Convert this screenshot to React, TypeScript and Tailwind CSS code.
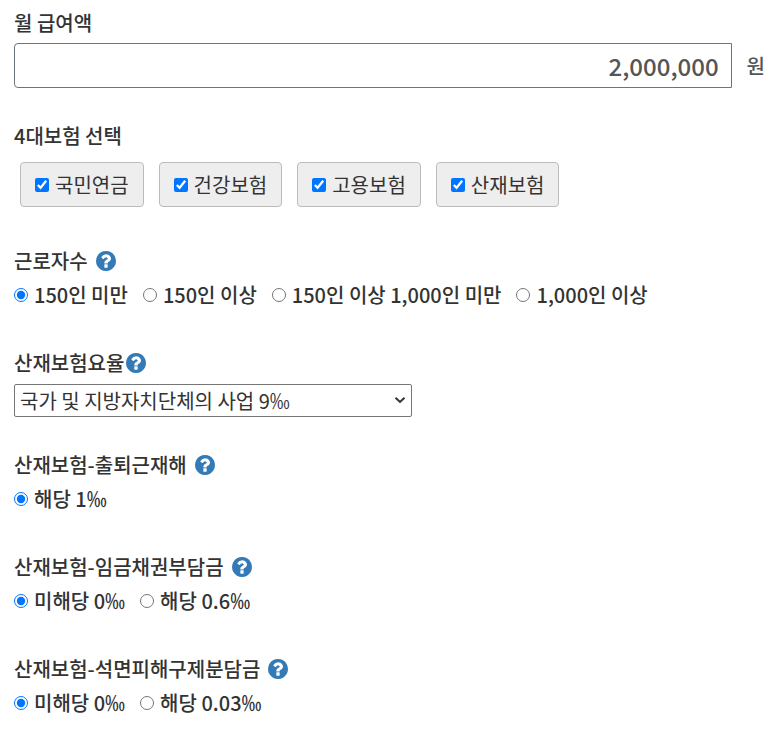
import { useState } from 'react';
import type { ReactNode } from 'react';

const INSURANCES = ['국민연금', '건강보험', '고용보험', '산재보험'];

const WORKER_COUNTS = ['150인 미만', '150인 이상', '150인 이상 1,000인 미만', '1,000인 이상'];

function HelpButton({ label }: { label: string }) {
  return (
    <button type="button" aria-label={label} className="shrink-0 text-[#337ab7]">
      <svg viewBox="0 0 1536 1536" className="size-5" fill="currentColor" aria-hidden="true">
        <path d="M896 1248v-192q0-14-9-23t-23-9H672q-14 0-23 9t-9 23v192q0 14 9 23t23 9h192q14 0 23-9t9-23zm256-672q0-88-55.500-163T958 297t-170-41q-243 0-371 213-15 24 8 42l132 100q7 6 19 6 16 0 25-12 53-68 86-92 34-24 86-24 48 0 85.500 26t37.500 59q0 38-20 61t-68 45q-63 28-115.500 86.500T640 892v36q0 14 9 23t23 9h192q14 0 23-9t9-23q0-19 21.500-49.500T972 829q32-18 49-28.500t46-35 44.500-48 28-60.500 12.500-81zm384 192q0 209-103 385.500T1153.500 1433 768 1536t-385.500-103T103 1153.500 0 768t103-385.500T382.500 103 768 0t385.500 103T1433 382.500 1536 768z" />
      </svg>
    </button>
  );
}

interface RadioSectionProps {
  title: string;
  name: string;
  options: string[];
}

function RadioSection({ title, name, options }: RadioSectionProps) {
  const [selected, setSelected] = useState(options[0]);

  return (
    <Section title={title} help>
      <div role="radiogroup" aria-label={title} className="mt-1 mb-[5px] flex flex-wrap gap-x-[15px]">
        {options.map((option) => (
          <label key={option} className="flex items-center gap-1.5 font-medium">
            <input
              type="radio"
              name={name}
              checked={selected === option}
              onChange={() => setSelected(option)}
              className="size-3.5 accent-[#0075ff]"
            />
            {option}
          </label>
        ))}
      </div>
    </Section>
  );
}

interface SectionProps {
  title: string;
  htmlFor?: string;
  help?: boolean;
  tight?: boolean;
  children: ReactNode;
}

function Section({ title, htmlFor, help, tight, children }: SectionProps) {
  return (
    <section>
      <div className={`flex items-center ${tight ? 'gap-0.5' : 'gap-2'}`}>
        {htmlFor ? (
          <label htmlFor={htmlFor} className="font-medium">
            {title}
          </label>
        ) : (
          <h2 className="font-medium">{title}</h2>
        )}
        {help && <HelpButton label={`${title} 도움말`} />}
      </div>
      {children}
    </section>
  );
}

export default function App() {
  const [salary, setSalary] = useState('2,000,000');
  const [checked, setChecked] = useState<string[]>(INSURANCES);

  const toggle = (name: string) => {
    setChecked((prev) => (prev.includes(name) ? prev.filter((n) => n !== name) : [...prev, name]));
  };

  return (
    <form className="flex flex-col gap-[33px] px-3.5 py-2 font-['Noto_Sans_CJK_KR',sans-serif] text-[20px] leading-[30px] text-[#333]">
      <Section title="월 급여액" htmlFor="salary">
        <div className="mt-[5px] flex items-center">
          <input
            id="salary"
            type="text"
            inputMode="numeric"
            value={salary}
            onChange={(e) => setSalary(e.target.value)}
            className="h-[45px] min-w-0 flex-1 rounded-l border border-[#6c757d] px-3 text-right text-2xl font-medium text-[#555]"
          />
          <span className="pl-[15px] font-medium text-[#555]">원</span>
        </div>
      </Section>

      <Section title="4대보험 선택">
        <div className="mx-1.5 mt-[11px] mb-1.5 flex flex-wrap gap-[15px]">
          {INSURANCES.map((name) => (
            <label
              key={name}
              className="flex h-[45px] items-center gap-1.5 rounded border border-[#bbb] bg-[#eee] px-3.5"
            >
              <input
                type="checkbox"
                checked={checked.includes(name)}
                onChange={() => toggle(name)}
                className="size-3.5 accent-[#0075ff]"
              />
              {name}
            </label>
          ))}
        </div>
      </Section>

      <RadioSection title="근로자수" name="workers" options={WORKER_COUNTS} />

      <Section title="산재보험요율" htmlFor="rate" help tight>
        <div className="relative mt-1.5 w-[398px] max-w-full">
          <select
            id="rate"
            className="block h-[33px] w-full appearance-none rounded-[2px] border border-[#767676] bg-white pr-6 pl-[5px]"
          >
            <option>국가 및 지방자치단체의 사업 9‰</option>
          </select>
          <svg
            viewBox="0 0 12 8"
            className="pointer-events-none absolute top-3 right-1.5 h-2 w-3"
            fill="none"
            stroke="currentColor"
            strokeWidth={2}
            aria-hidden="true"
          >
            <path d="M1.500 1.800 6 6l4.500-4.200" />
          </svg>
        </div>
      </Section>

      <RadioSection title="산재보험-출퇴근재해" name="commute" options={['해당 1‰']} />
      <RadioSection title="산재보험-임금채권부담금" name="wage" options={['미해당 0‰', '해당 0.6‰']} />
      <RadioSection title="산재보험-석면피해구제분담금" name="asbestos" options={['미해당 0‰', '해당 0.03‰']} />
    </form>
  );
}
